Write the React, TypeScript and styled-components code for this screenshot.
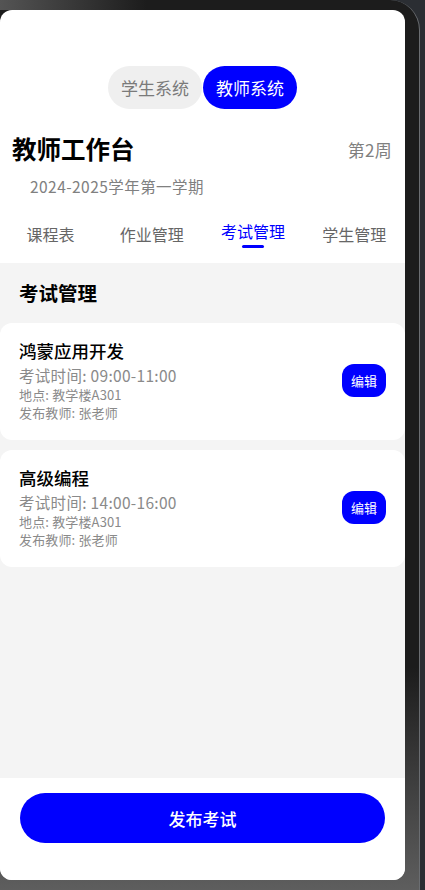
import React, { useState } from 'react';
import styled, { createGlobalStyle } from 'styled-components';

const BLUE = '#0000ff';

const GlobalStyle = createGlobalStyle`
  html, body {
    margin: 0;
    padding: 0;
    background: #2b2e33;
    font-family: 'Noto Sans CJK SC', 'Noto Sans', sans-serif;
  }
  * { box-sizing: border-box; }
`;

interface Exam {
  name: string;
  time: string;
  place: string;
  teacher: string;
}

const exams: Exam[] = [
  { name: '鸿蒙应用开发', time: '09:00-11:00', place: '教学楼A301', teacher: '张老师' },
  { name: '高级编程', time: '14:00-16:00', place: '教学楼A301', teacher: '张老师' },
];

const tabs = ['课程表', '作业管理', '考试管理', '学生管理'];

const App: React.FC = () => {
  const [system, setSystem] = useState<'student' | 'teacher'>('teacher');
  const [tab, setTab] = useState(2);

  return (
    <>
      <GlobalStyle />
      <Bezel>
        <Screen>
          <Header>
            <Switcher>
              <SwitchButton active={system === 'student'} onClick={() => setSystem('student')}>
                学生系统
              </SwitchButton>
              <SwitchButton active={system === 'teacher'} onClick={() => setSystem('teacher')}>
                教师系统
              </SwitchButton>
            </Switcher>
            <TitleRow>
              <Title>教师工作台</Title>
              <Week>第2周</Week>
            </TitleRow>
            <Term>2024-2025学年第一学期</Term>
            <TabBar>
              {tabs.map((label, index) => (
                <TabItem key={label} onClick={() => setTab(index)}>
                  <TabLabel active={tab === index}>{label}</TabLabel>
                  {tab === index && <TabIndicator />}
                </TabItem>
              ))}
            </TabBar>
          </Header>
          <Content>
            <SectionTitle>考试管理</SectionTitle>
            <CardList>
              {exams.map((exam) => (
                <Card key={exam.name}>
                  <CardInfo>
                    <ExamName>{exam.name}</ExamName>
                    <ExamTime>考试时间: {exam.time}</ExamTime>
                    <ExamMeta>地点: {exam.place}</ExamMeta>
                    <ExamMeta>发布教师: {exam.teacher}</ExamMeta>
                  </CardInfo>
                  <EditButton>编辑</EditButton>
                </Card>
              ))}
            </CardList>
          </Content>
          <Footer>
            <PublishButton>发布考试</PublishButton>
          </Footer>
        </Screen>
      </Bezel>
    </>
  );
};

const Bezel = styled.div`
  width: 420px;
  height: 890px;
  padding: 10px 15px 10px 0;
  background:
    linear-gradient(90deg, rgba(90, 90, 90, 0.9) 0%, rgba(40, 40, 40, 0) 35%) top / 100% 10px no-repeat,
    linear-gradient(180deg, #1c1c1c 0%, #1c1c1c 75%, #5e5e5e 100%);
  border-right: 1px solid #6b6e72;
  border-top-right-radius: 30px;
  overflow: hidden;
`;

const Screen = styled.div`
  width: 405px;
  height: 870px;
  background: #fff;
  border-radius: 12px;
  overflow: hidden;
  display: flex;
  flex-direction: column;
`;

const Header = styled.div`
  padding-top: 56px;
  display: flex;
  flex-direction: column;
`;

const Switcher = styled.div`
  display: flex;
  justify-content: center;
  gap: 1px;
`;

const SwitchButton = styled.button<{ active: boolean }>`
  width: 94px;
  height: 43px;
  border: none;
  border-radius: 22px;
  padding: 0;
  font-family: inherit;
  font-size: 17px;
  background: ${({ active }) => (active ? BLUE : '#efefef')};
  color: ${({ active }) => (active ? '#fff' : '#7a7a7a')};
  cursor: pointer;
`;

const TitleRow = styled.div`
  display: flex;
  align-items: center;
  justify-content: space-between;
  padding: 0 13px 0 12px;
  margin-top: 23px;
  height: 34px;
`;

const Title = styled.h1`
  margin: 0;
  font-size: 24.5px;
  font-weight: 700;
  color: #000;
  line-height: 34px;
`;

const Week = styled.span`
  font-size: 17px;
  letter-spacing: 0.3px;
  color: #808080;
`;

const Term = styled.div`
  margin-top: 9px;
  padding-left: 30px;
  font-size: 15.5px;
  line-height: 22px;
  letter-spacing: 0.45px;
  color: #808080;
`;

const TabBar = styled.div`
  margin-top: 8px;
  height: 58px;
  display: grid;
  grid-template-columns: repeat(4, 1fr);
  align-items: center;
`;

const TabItem = styled.div`
  display: flex;
  flex-direction: column;
  align-items: center;
  cursor: pointer;
`;

const TabLabel = styled.span<{ active: boolean }>`
  font-size: 16px;
  line-height: 22px;
  color: ${({ active }) => (active ? BLUE : '#666')};
`;

const TabIndicator = styled.span`
  margin-top: 3px;
  width: 22px;
  height: 3px;
  border-radius: 2px;
  background: ${BLUE};
`;

const Content = styled.div`
  flex: 1;
  background: #f4f4f4;
  padding-top: 16px;
`;

const SectionTitle = styled.h2`
  margin: 0 0 16px;
  padding-left: 19px;
  font-size: 19.5px;
  font-weight: 700;
  line-height: 28px;
  color: #000;
`;

const CardList = styled.div`
  display: flex;
  flex-direction: column;
  gap: 10px;
`;

const Card = styled.div`
  background: #fff;
  border-radius: 12px;
  padding: 16px 19px 18px;
  display: flex;
  align-items: center;
  justify-content: space-between;
`;

const CardInfo = styled.div`
  display: flex;
  flex-direction: column;
`;

const ExamName = styled.div`
  font-size: 17.5px;
  line-height: 24px;
  color: #000;
  font-weight: 500;
`;

const ExamTime = styled.div`
  margin-top: 1px;
  font-size: 15.5px;
  line-height: 22px;
  letter-spacing: 0.3px;
  color: #8a8a8a;
`;

const ExamMeta = styled.div`
  font-size: 13px;
  line-height: 18px;
  letter-spacing: 0.15px;
  color: #8a8a8a;
`;

const EditButton = styled.button`
  width: 44px;
  height: 33px;
  border: none;
  border-radius: 12px;
  padding: 0;
  background: ${BLUE};
  color: #fff;
  font-family: inherit;
  font-size: 13px;
  cursor: pointer;
`;

const Footer = styled.div`
  height: 102px;
  background: #fff;
  padding: 15px 20px 0;
`;

const PublishButton = styled.button`
  width: 100%;
  height: 50px;
  border: none;
  border-radius: 25px;
  background: ${BLUE};
  color: #fff;
  font-family: inherit;
  font-size: 17px;
  font-weight: 500;
  cursor: pointer;
`;

export default App;
